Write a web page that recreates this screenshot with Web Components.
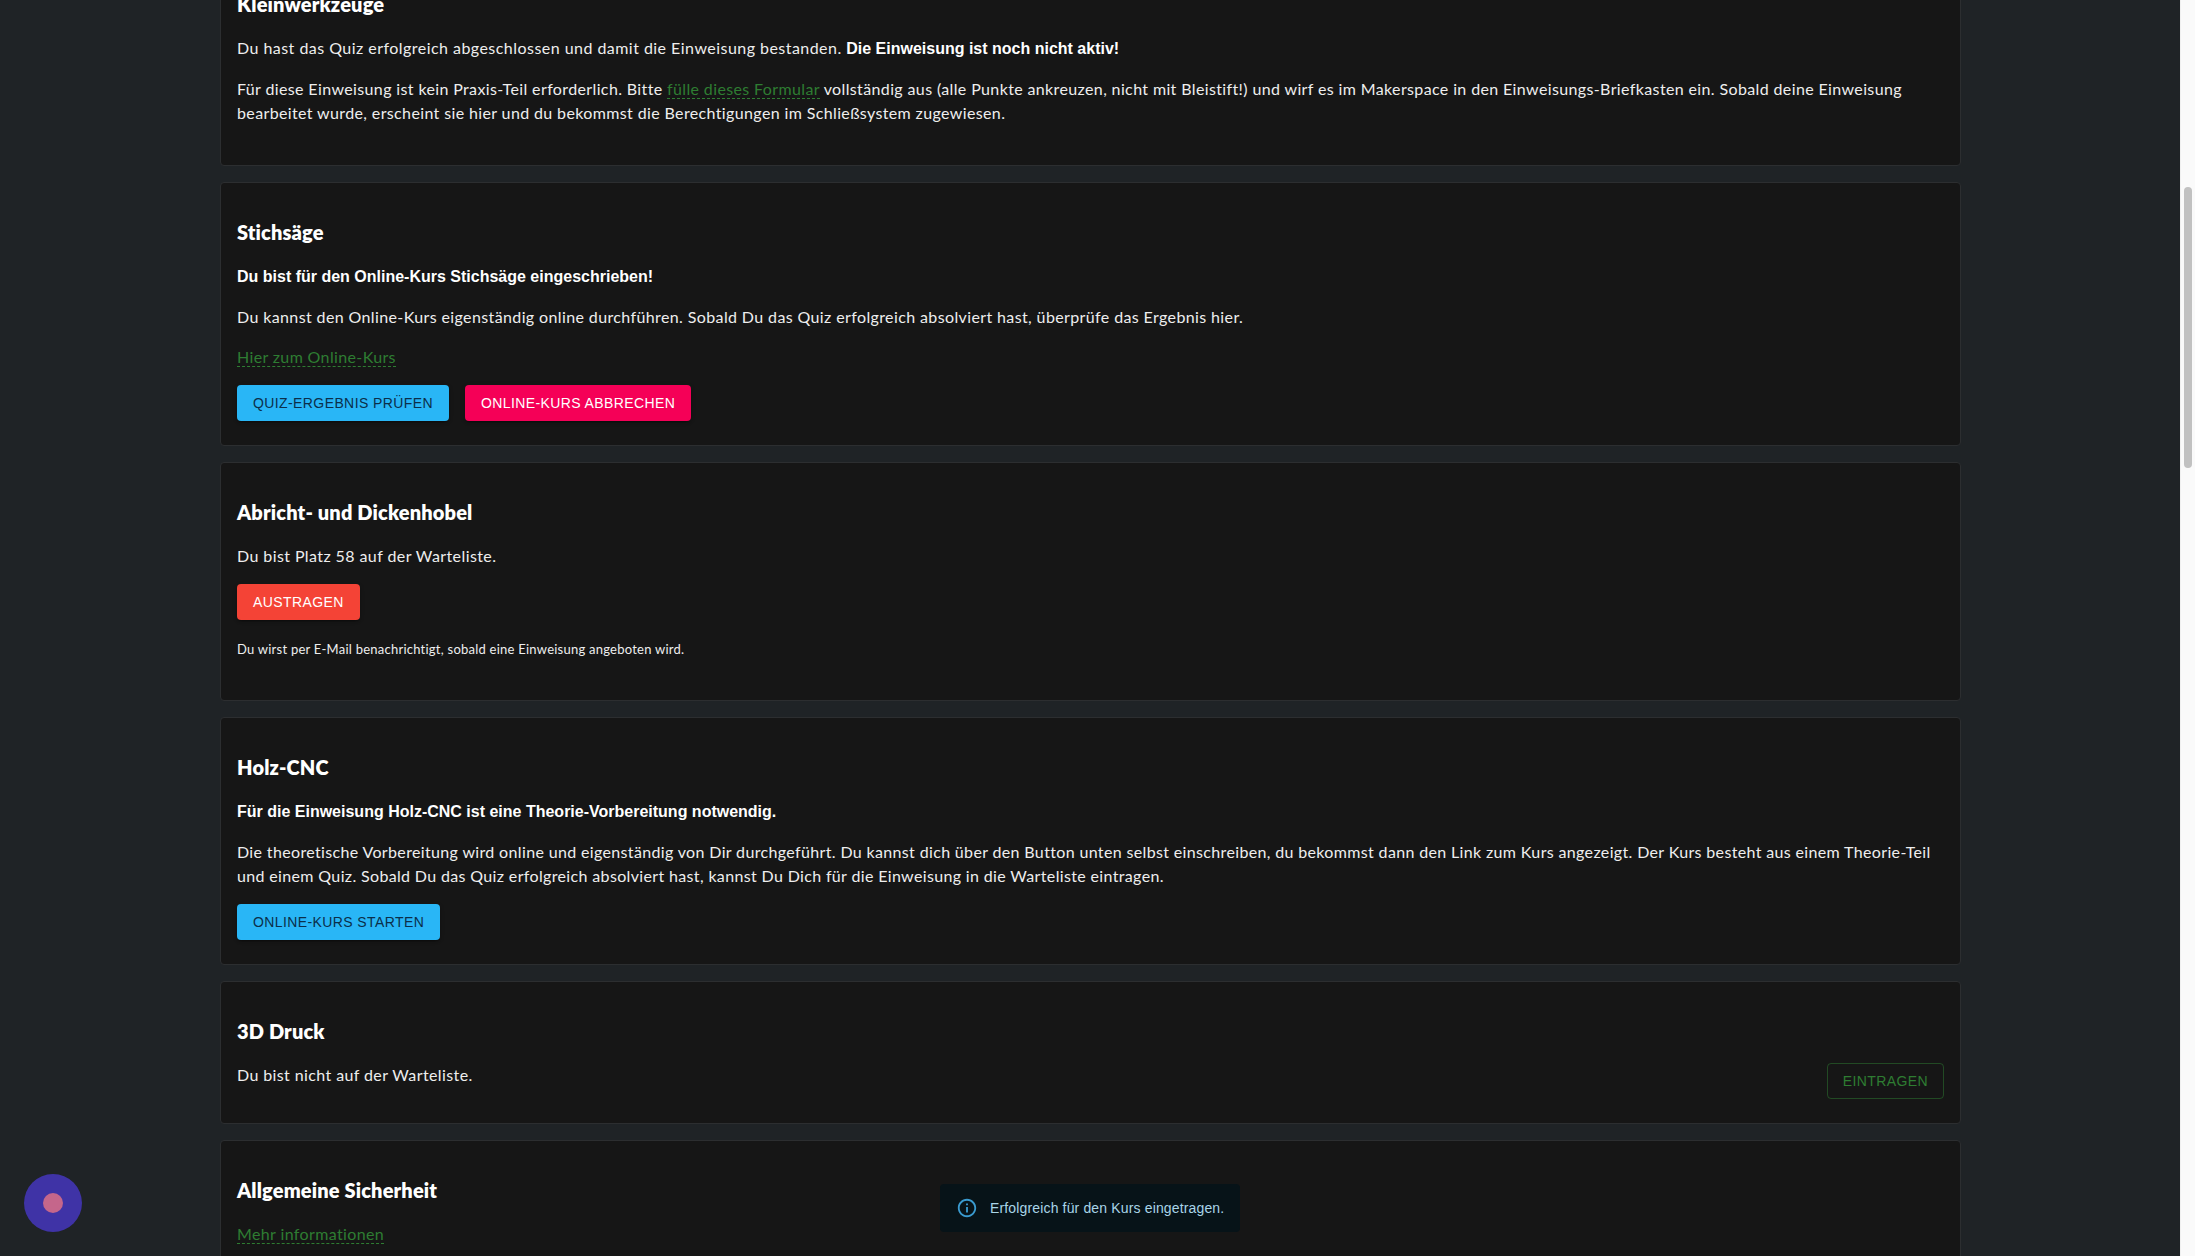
<!DOCTYPE html>
<html lang="de"><head><meta charset="utf-8"><title>Einweisungen</title>
<style>
html,body{margin:0;height:1256px;overflow:hidden;background:#1f2326;color:#eeeeee;font-family:Lato,"Noto Sans",sans-serif;font-size:16px;line-height:24px}
</style></head><body>
<course-page>
<course-card style="margin-top:-46px">
  <span slot="title">Kleinwerkzeuge</span>
  <p-text style="letter-spacing:.46px">Du hast das Quiz erfolgreich abgeschlossen und damit die Einweisung bestanden. <b-text>Die Einweisung ist noch nicht aktiv!</b-text></p-text>
  <p-text style="letter-spacing:.37px">Für diese Einweisung ist kein Praxis-Teil erforderlich. Bitte <dash-link>fülle dieses Formular</dash-link> vollständig aus (alle Punkte ankreuzen, nicht mit Bleistift!) und wirf es im Makerspace in den Einweisungs-Briefkasten ein. Sobald deine Einweisung bearbeitet wurde, erscheint sie hier und du bekommst die Berechtigungen im Schließsystem zugewiesen.</p-text>
</course-card>
<course-card>
  <span slot="title">Stichsäge</span>
  <p-text><b-text>Du bist für den Online-Kurs Stichsäge eingeschrieben!</b-text></p-text>
  <p-text style="letter-spacing:.38px">Du kannst den Online-Kurs eigenständig online durchführen. Sobald Du das Quiz erfolgreich absolviert hast, überprüfe das Ergebnis hier.</p-text>
  <p-text style="letter-spacing:.36px"><dash-link>Hier zum Online-Kurs</dash-link></p-text>
  <btn-row><ui-button kind="blue">Quiz-Ergebnis prüfen</ui-button><ui-button kind="pink">Online-Kurs abbrechen</ui-button></btn-row>
</course-card>
<course-card pad="41">
  <span slot="title">Abricht- und Dickenhobel</span>
  <p-text>Du bist Platz 58 auf der Warteliste.</p-text>
  <btn-row><ui-button kind="red">Austragen</ui-button></btn-row>
  <small-text>Du wirst per E-Mail benachrichtigt, sobald eine Einweisung angeboten wird.</small-text>
</course-card>
<course-card>
  <span slot="title">Holz-CNC</span>
  <p-text><b-text>Für die Einweisung Holz-CNC ist eine Theorie-Vorbereitung notwendig.</b-text></p-text>
  <p-text style="letter-spacing:.35px">Die theoretische Vorbereitung wird online und eigenständig von Dir durchgeführt. Du kannst dich über den Button unten selbst einschreiben, du bekommst dann den Link zum Kurs angezeigt. Der Kurs besteht aus einem Theorie-Teil und einem Quiz. Sobald Du das Quiz erfolgreich absolviert hast, kannst Du Dich für die Einweisung in die Warteliste eintragen.</p-text>
  <btn-row><ui-button kind="blue">Online-Kurs starten</ui-button></btn-row>
</course-card>
<course-card>
  <span slot="title">3D Druck</span>
  <split-row><p-text style="margin:0;letter-spacing:.39px">Du bist nicht auf der Warteliste.</p-text><ui-button kind="outline">Eintragen</ui-button></split-row>
</course-card>
<course-card>
  <span slot="title">Allgemeine Sicherheit</span>
  <p-text style="letter-spacing:.37px"><dash-link>Mehr informationen</dash-link></p-text>
</course-card>
</course-page>
<fake-scrollbar></fake-scrollbar>
<status-toast>Erfolgreich für den Kurs eingetragen.</status-toast>
<chat-fab></chat-fab>
<script>
function def(name,css,html,init){
  customElements.define(name,class extends HTMLElement{
    constructor(){super();this.attachShadow({mode:'open'}).innerHTML='<style>'+css+'</style>'+html;}
    connectedCallback(){init&&init(this);}
  });
}
const ARIAL='"Liberation Sans",Arial,sans-serif';
def('course-page',':host{display:flex;flex-direction:column;gap:16px;width:1741px;margin-left:220px}','<slot></slot>');
def('course-card',`:host{display:block;box-sizing:border-box;background:#161616;border:1px solid #2c2e30;border-radius:4px;padding:33px 16px var(--pb,24px)}
h5{margin:0 0 16px;font:800 20px/32px Lato,"Noto Sans",sans-serif;letter-spacing:.15px;color:#fff}`,
 '<h5><slot name="title"></slot></h5><slot></slot>',el=>{if(el.getAttribute('pad'))el.style.setProperty('--pb',el.getAttribute('pad')+'px');});
def('p-text',':host{display:block;margin:0 0 16px;font-size:16px;line-height:24px;letter-spacing:.41px}','<slot></slot>');
def('b-text',`:host{display:inline;font-family:${ARIAL};font-weight:700;letter-spacing:0;color:#fff}`,'<slot></slot>');
def('small-text',':host{display:block;margin:19px 0 0;font-size:13px;line-height:20px;letter-spacing:.24px}','<slot></slot>');
def('dash-link',':host{display:inline;color:#2e7d32;border-bottom:1px dashed #2e7d32}','<slot></slot>');
def('btn-row',':host{display:flex;gap:16px}','<slot></slot>');
def('split-row',':host{display:flex;justify-content:space-between;align-items:flex-start}','<slot></slot>');
def('ui-button',`:host{display:inline-flex;align-items:center;box-sizing:border-box;height:36px;padding:0 16px;border-radius:4px;font:400 14px/24px ${ARIAL};letter-spacing:.4px;text-transform:uppercase;white-space:nowrap;box-shadow:0 3px 1px -2px rgba(0,0,0,.2),0 2px 2px rgba(0,0,0,.14),0 1px 5px rgba(0,0,0,.12)}
:host([kind=blue]){background:#29b6f6;color:#0b2f4a}
:host([kind=pink]){background:#f50057;color:#fff}
:host([kind=red]){background:#f44336;color:#fff}
:host([kind=outline]){background:transparent;color:#2e7d32;border:1px solid rgba(46,125,50,.5);padding:0 15px;box-shadow:none}`,'<slot></slot>');
def('fake-scrollbar',`:host{position:fixed;top:0;right:0;bottom:0;width:15px;background:#fafafa;box-sizing:border-box;border-left:1px solid #f0f0f0}
i{position:absolute;left:3px;top:187px;width:8px;height:281px;border-radius:4px;background:#c1c1c1}`,'<i></i>');
def('status-toast',`:host{position:fixed;left:940px;top:1184px;width:300px;height:48px;box-sizing:border-box;display:flex;align-items:center;gap:12px;padding:0 16px;background:#071318;border-radius:4px;color:#a9d5e8;font:400 14px/20px ${ARIAL};letter-spacing:.15px;white-space:nowrap}
svg{width:22px;height:22px;flex:none;fill:#3a9bd0}`,'<svg viewBox="0 0 24 24"><path d="M11 7h2v2h-2zm0 4h2v6h-2zm1-9C6.48 2 2 6.48 2 12s4.48 10 10 10 10-4.48 10-10S17.52 2 12 2zm0 18c-4.41 0-8-3.59-8-8s3.59-8 8-8 8 3.59 8 8-3.59 8-8 8z"/></svg><span><slot></slot></span>');
def('chat-fab',`:host{position:fixed;left:24px;top:1174px;width:58px;height:58px;border-radius:50%;background:#3f33a6;display:flex;align-items:center;justify-content:center}
i{width:20px;height:20px;border-radius:50%;background:#c5668b}`,'<i></i>');
</script>
</body></html>
